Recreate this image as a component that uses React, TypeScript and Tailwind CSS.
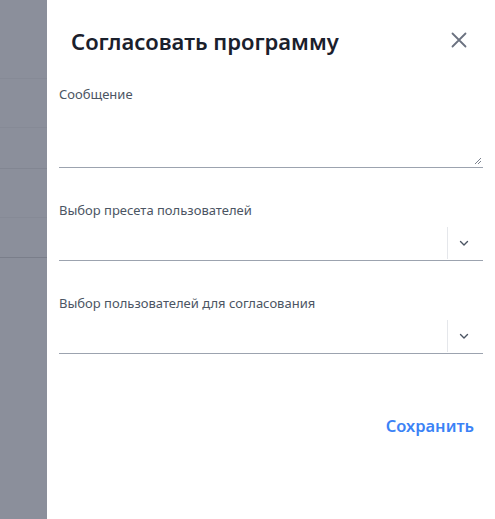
import React from "react";

function Chevron() {
  return (
    <svg width="12" height="12" viewBox="0 0 12 12" fill="none">
      <path d="M2.5 4.5 L6 8 L9.5 4.5" stroke="#4b5563" strokeWidth="1.4" strokeLinecap="round" strokeLinejoin="round" />
    </svg>
  );
}

function SelectField({ label }: { label: string }) {
  return (
    <div className="flex flex-col">
      <div className="text-[13px] leading-[18px] text-[#4b5563]">{label}</div>
      <div className="mt-[6px] h-[36px] flex items-center border-b border-[#9ca3af]">
        <div className="flex-1" />
        <div className="w-px h-[32px] bg-[#e5e7eb]" />
        <div className="w-[35px] pr-[3px] flex items-center justify-center">
          <Chevron />
        </div>
      </div>
    </div>
  );
}

export default function App() {
  return (
    <div className="w-[495px] h-[519px] flex overflow-hidden" style={{ fontFamily: '"Noto Sans", "Open Sans", sans-serif' }}>
      <div className="w-[47px] bg-[#8b8f9b] flex flex-col">
        <div className="h-[79px] border-b border-[#868a96]" />
        <div className="h-[49px] border-b border-[#868a96]" />
        <div className="h-[41px] border-b border-[#828692]" />
        <div className="h-[49px] border-b border-[#868a96]" />
        <div className="h-[40px] border-b border-[#7a7e8a]" />
      </div>
      <div className="flex-1 bg-white flex flex-col">
        <div className="flex items-center justify-between pl-[24px] pr-[28px] pt-[25px]">
          <h1 className="text-[22px] leading-[32px] font-semibold text-[#1a202c]">Согласовать программу</h1>
          <svg width="16" height="16" viewBox="0 0 16 16" fill="none" className="mt-[-2px]">
            <path d="M1.5 1.5 L14.5 14.5 M14.5 1.5 L1.5 14.5" stroke="#6b7280" strokeWidth="1.8" strokeLinecap="round" />
          </svg>
        </div>
        <div className="px-[12px] mt-[28px] flex flex-col">
          <div className="text-[13px] leading-[18px] text-[#4b5563]">Сообщение</div>
          <div className="relative mt-[10px] h-[55px] border-b border-[#9ca3af]">
            <svg width="8" height="8" viewBox="0 0 8 8" className="absolute right-[1px] bottom-[2px]">
              <path d="M7 1 L1 7 M7 4 L4 7" stroke="#6b7280" strokeWidth="0.9" />
            </svg>
          </div>
          <div className="mt-[33px]">
            <SelectField label="Выбор пресета пользователей" />
          </div>
          <div className="mt-[33px]">
            <SelectField label="Выбор пользователей для согласования" />
          </div>
          <div className="flex justify-end mt-[61px] pr-[9px]">
            <button className="text-[16.5px] leading-[22px] font-semibold text-[#3b82f6]">Сохранить</button>
          </div>
        </div>
      </div>
    </div>
  );
}
